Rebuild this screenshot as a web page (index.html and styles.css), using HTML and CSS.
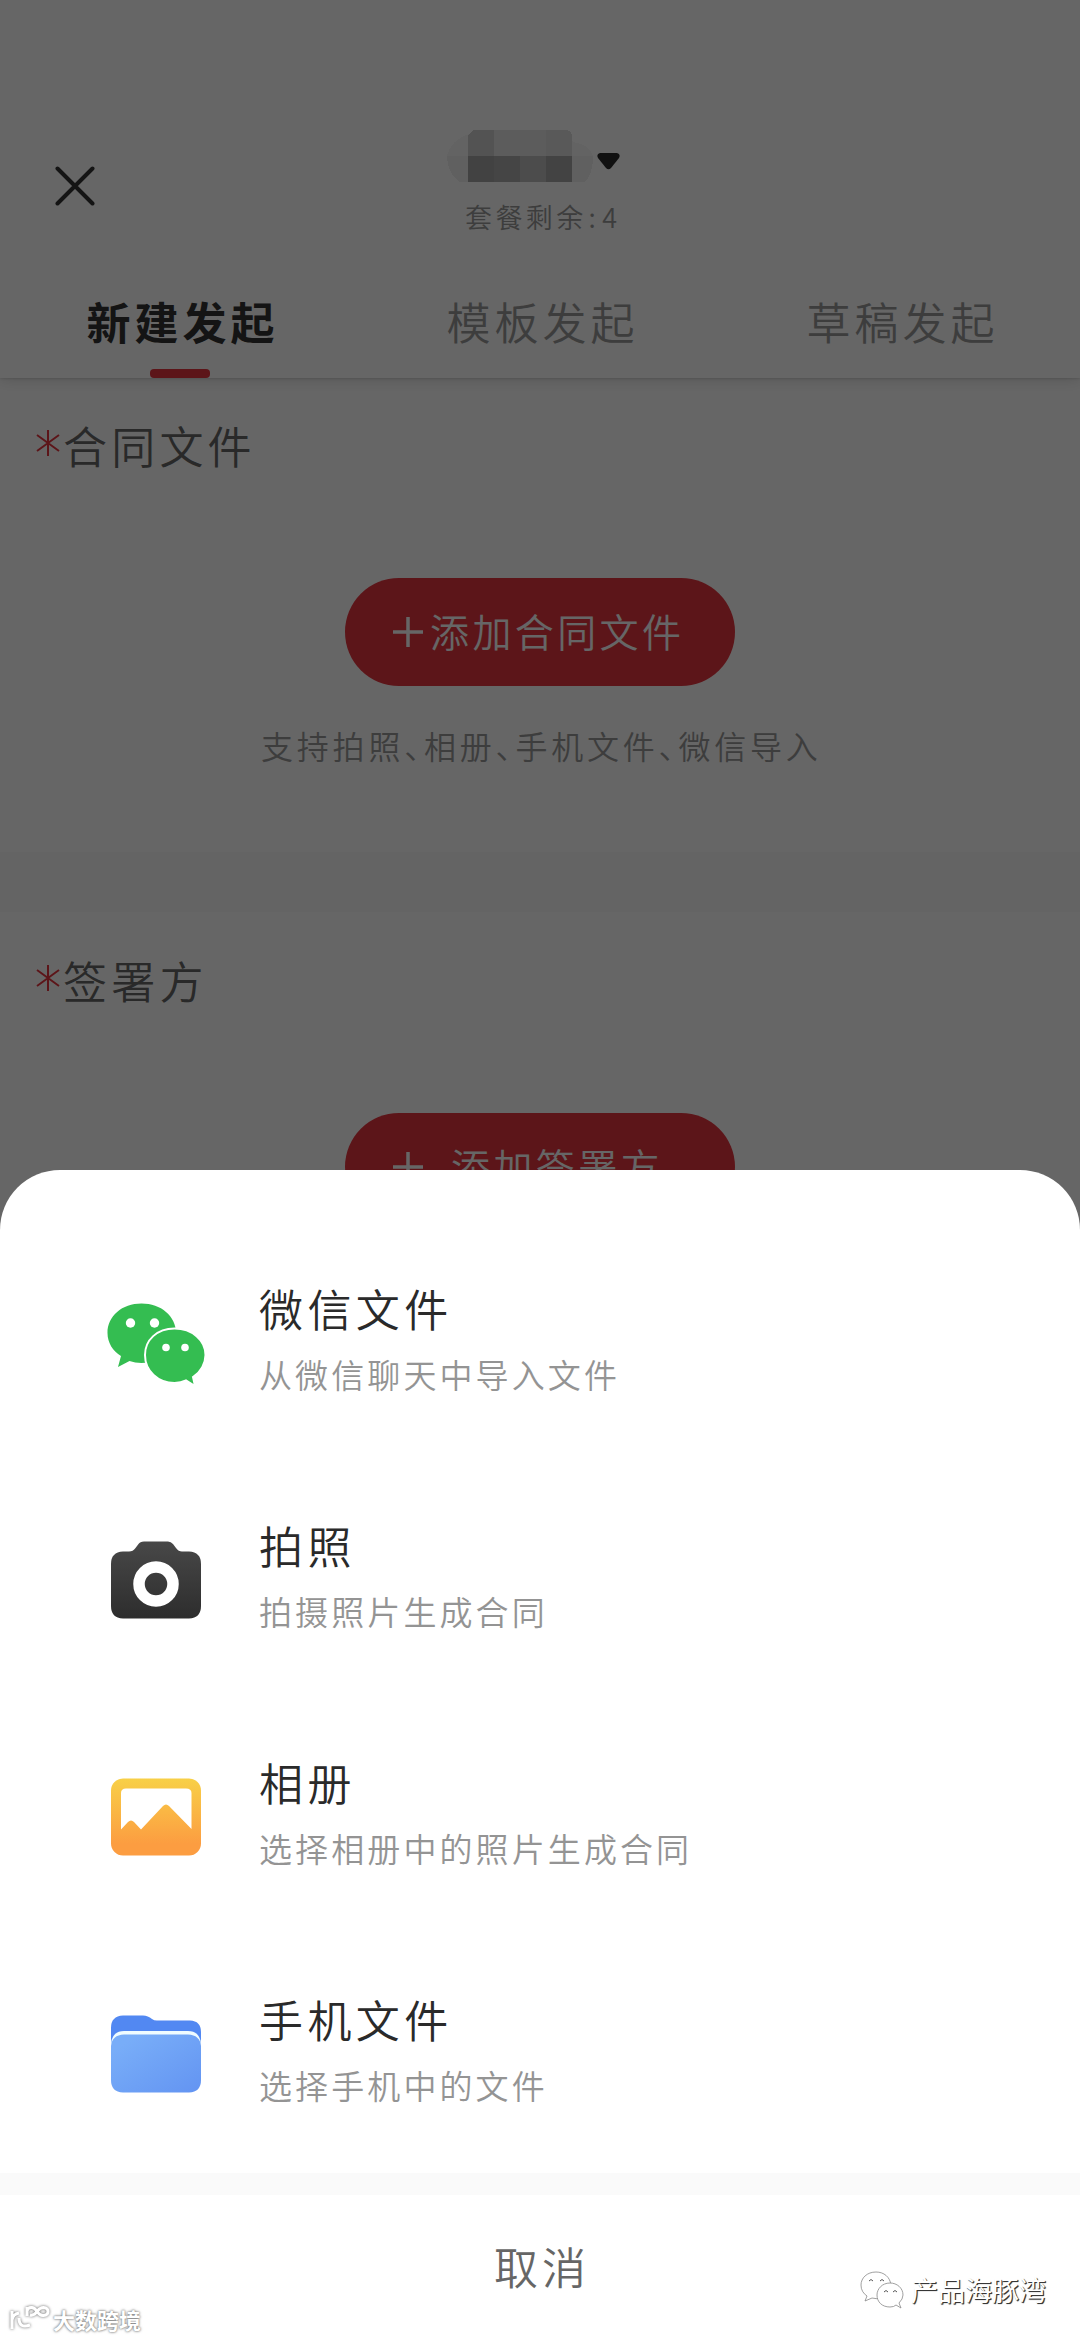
FILE: index.html
```html
<!DOCTYPE html>
<html lang="zh-CN">
<head>
<meta charset="utf-8">
<title>新建发起</title>
<link rel="stylesheet" href="styles.css">
</head>
<body>
<div class="screen">
  <header class="header">
    <svg class="close" viewBox="0 0 40 40"><path d="M2.500 2.500 37.500 37.500M37.500 2.500 2.500 37.500"/></svg>
    <div class="account">
      <div class="account-row">
        <svg class="mosaic" viewBox="0 0 146 52" shape-rendering="crispEdges">
          <path d="M0 26Q4 10 22 4L26 0H120L126 12Q143 15 146 26Z" fill="#f7f7f7"/>
          <path d="M0 26H146Q146 44 138 52H12Q0 42 0 26Z" fill="#f1f1f1"/>
          <path d="M21 5 27 0H47V26H21Z" fill="#d0d0d0"/>
          <path d="M47 0H99V26H47Z" fill="#e5e5e5"/>
          <path d="M99 0H120Q125 2 125 7V26H99Z" fill="#dedede"/>
          <path d="M21 26H47V52H21Z" fill="#a5a5a5"/>
          <path d="M47 26H73V52H47Z" fill="#adadad"/>
          <path d="M73 26H99V52H73Z" fill="#bdbdbd"/>
          <path d="M99 26H125V52H99Z" fill="#a8a8a8"/>
        </svg>
        <svg class="caret" viewBox="0 0 23 17"><path d="M3 0H20Q24 1 22 5L14 15Q11.500 17.500 9 15L1 5Q-1 1 3 0Z"/></svg>
      </div>
      <div class="quota">套餐剩余<span class="colon">:</span>4</div>
    </div>
    <nav class="tabs">
      <div class="tab active">新建发起</div>
      <div class="tab">模板发起</div>
      <div class="tab">草稿发起</div>
    </nav>
  </header>
  <section class="block">
    <h2 class="label"><svg class="star" viewBox="0 0 24 26"><path d="M12 0V26M1 5 23 21M23 5 1 21"/></svg>合同文件</h2>
    <div class="button"><svg class="plus" viewBox="0 0 30 30"><path d="M15 0V30M0 15H30"/></svg><span>添加合同文件</span></div>
    <p class="hint">支持拍照、相册、手机文件、微信导入</p>
  </section>
  <section class="block">
    <h2 class="label"><svg class="star" viewBox="0 0 24 26"><path d="M12 0V26M1 5 23 21M23 5 1 21"/></svg>签署方</h2>
    <div class="button spaced"><svg class="plus" viewBox="0 0 30 30"><path d="M15 0V30M0 15H30"/></svg><span>添加签署方</span></div>
  </section>

  <div class="mask"></div>

  <div class="sheet">
    <div class="options">
      <div class="option">
        <svg class="icon" viewBox="0 0 98 82">
          <g fill="#34bd51"><path d="M34.500 1.500C15 1.500 .5 14 .5 31C.5 41 6 49 14 54L11 65 22.500 59Q28 61 34.500 61C54 61 69 47 69 31C69 14 54 1.500 34.500 1.500Z"/>
          <path d="M67.500 26.500C50 26.500 38 38 38 53C38 69 51 81 67.500 81Q74 81 79 78.500L88 84 86 75C94 70 98.500 61 98.500 53C98.500 38 85 26.500 67.500 26.500Z" stroke="#fff" stroke-width="2"/></g>
          <g fill="#fff"><circle cx="23.500" cy="21" r="4.700"/><circle cx="47.500" cy="21" r="4.700"/><circle cx="59" cy="45.500" r="3.800"/><circle cx="78" cy="45.500" r="3.800"/></g>
        </svg>
        <div class="copy"><div class="title">微信文件</div><div class="desc">从微信聊天中导入文件</div></div>
      </div>
      <div class="option">
        <svg class="icon" viewBox="0 0 98 82">
          <defs><linearGradient id="dark" x2="0" y2="1"><stop stop-color="#484848"/><stop offset="1" stop-color="#2d2d2d"/></linearGradient></defs>
          <path d="M16 12.500H22Q26 12.500 28.500 9L31.500 5Q33 2.500 37 2.500H61Q64 2.500 66 5L69 9Q71.500 12.500 75 12.500H82Q94 13 94 25V67Q94 79 82 79.500H16Q4 79 4 67V25Q4 13 16 12.500Z" fill="url(#dark)"/>
          <circle cx="49" cy="45" r="17" fill="none" stroke="#fff" stroke-width="11.500"/>
        </svg>
        <div class="copy"><div class="title">拍照</div><div class="desc">拍摄照片生成合同</div></div>
      </div>
      <div class="option">
        <svg class="icon" viewBox="0 0 98 82">
          <defs><linearGradient id="sun" x2="0" y2="1"><stop stop-color="#f8d047"/><stop offset=".85" stop-color="#fc9d41"/></linearGradient></defs>
          <rect x="4" y="2.500" width="90" height="77" rx="12" fill="url(#sun)"/>
          <path d="M14 17Q14 12.500 19 12.500H79Q84.500 12.500 84.500 17V53L62 30Q59 27 56 30L34 53.500 27 46Q24 43 21 46L14 53.500Z" fill="#fff"/>
        </svg>
        <div class="copy"><div class="title">相册</div><div class="desc">选择相册中的照片生成合同</div></div>
      </div>
      <div class="option">
        <svg class="icon" viewBox="0 0 98 82">
          <defs><linearGradient id="sky" x2="1" y2="1"><stop offset=".15" stop-color="#78adf8"/><stop offset="1" stop-color="#6394f2"/></linearGradient></defs>
          <path d="M16 2.500H36Q41 2.500 45 6Q47 7.500 50 7.500H83Q94 8 94 19V45H4V15Q4 3 16 2.500Z" fill="#5288f2"/>
          <path d="M4 31Q5 18 17 18H81Q93 18 94 31V45H4Z" fill="#effcff"/>
          <path d="M4 33Q5 22 17 21.500H81Q93 22 94 33V67Q94 79 82 79.500H16Q4 79 4 67Z" fill="url(#sky)"/>
        </svg>
        <div class="copy"><div class="title">手机文件</div><div class="desc">选择手机中的文件</div></div>
      </div>
    </div>
    <div class="cancel">取消</div>
  </div>

  <div class="mark-right">
    <svg class="mark-icon" viewBox="0 0 44 38"><g fill="#fff" stroke="#888" stroke-width=".8"><path d="M16 1C7 1 1 7 1 14Q1 21 7 25L5 30 12 27Q17 29 22 26C28 24 32 20 31 14C30 6 24 1 16 1Z"/><path d="M30 12C22 12 17 18 17 24C17 31 22 36 30 36Q34 36 36 34L41 37 39 32Q43 28 43 24C43 17 37 12 30 12Z"/></g><path d="M9 10q2-3 4 0M20 10q2-3 4 0M24 21q2-3 4 0M33 21q2-3 4 0" fill="none" stroke="#555"/></svg>
    <span>产品海豚湾</span>
  </div>
  <div class="mark-left">
    <svg class="mark-logo" viewBox="0 0 42 28"><path d="M3 7V25M3 16Q4 10 10 9M10 14Q10 25 21 21M18 3V12M18 7Q19 3 23 3.500Q26 4 28 7.500Q31 12 34.500 11.500Q39 11 39 7.500Q39 4 34.500 3.500Q31 3.500 28 7.500Q25 12 21 11"/></svg>
    <span>大数跨境</span>
  </div>
</div>
</body>
</html>
```
FILE: styles.css
```css
* { box-sizing: border-box; }
body {
  margin: 0;
  font-family: "Noto Sans CJK SC", sans-serif;
  font-weight: 350;
}
.screen {
  position: relative;
  width: 1080px;
  height: 2340px;
  overflow: hidden;
  background: #fff;
}
.header {
  display: grid;
  grid-template: 248px 130px / 360px 360px 360px;
  box-shadow: 0 1px 14px rgba(0, 0, 0, .16), 0 0 3px rgba(0, 0, 0, .2);
}
.close {
  width: 40px;
  height: 40px;
  margin: 166px 0 0 55px;
  fill: none;
  stroke: #333;
  stroke-width: 4;
  stroke-linecap: round;
}
.account { padding-top: 130px; }
.account-row {
  display: flex;
  gap: 4px;
  height: 52px;
  padding-left: 87px;
}
.mosaic { width: 146px; height: 52px; }
.caret { width: 23px; height: 17px; margin-top: 23px; fill: #2b2b2b; }
.quota {
  margin-top: 15px;
  padding-left: 105px;
  font-size: 27px;
  line-height: 40px;
  letter-spacing: 3.400px;
  color: #999;
}
.colon { margin: 0 3px 0 2px; }
.tabs {
  grid-column: 1 / 4;
  display: flex;
}
.tab {
  display: flex;
  flex: 1;
  flex-direction: column;
  align-items: center;
  justify-content: space-between;
  padding: 38px 0 0 5px;
  font-size: 44px;
  line-height: 70px;
  letter-spacing: 4px;
  color: #999;
}
.active { color: #333; font-weight: 700; }
.active::after {
  content: "";
  width: 60px;
  height: 9px;
  margin-right: 5px;
  border-radius: 4px;
  background: #e6353f;
}
.block {
  height: 474px;
  padding-top: 32px;
}
.block + .block {
  height: 600px;
  padding-top: 33px;
  margin-top: 60px;
  box-shadow: 0 -60px #fafafa;
}
.label {
  display: flex;
  align-items: center;
  height: 70px;
  margin: 0;
  padding-left: 36px;
  font-size: 44px;
  font-weight: 350;
  letter-spacing: 4.200px;
  color: #666;
}
.star {
  width: 24px;
  height: 26px;
  margin: 0 3px 5px 0;
  fill: none;
  stroke: #e6353f;
  stroke-width: 2;
}
.button {
  display: flex;
  align-items: center;
  width: 390px;
  height: 108px;
  margin: 98px auto 0;
  padding-left: 48px;
  border-radius: 54px;
  background: #e6353f;
  color: #fff;
  font-size: 39px;
  letter-spacing: 3.400px;
}
.button span { padding-bottom: 4px; }
.plus {
  width: 30px;
  height: 30px;
  margin-right: 7px;
  fill: none;
  stroke: #fff;
  stroke-width: 3.500;
}
.spaced .plus { margin-right: 28px; }
.hint {
  margin: 34px 0 0 261px;
  font-size: 32px;
  line-height: 50px;
  letter-spacing: 3.800px;
  font-feature-settings: "halt";
  color: #999;
}
.mask {
  position: absolute;
  inset: 0;
  background: rgba(0, 0, 0, .6);
}
.sheet {
  position: absolute;
  inset: 1170px 0 0;
  display: flex;
  flex-direction: column;
  border-radius: 60px 60px 0 0;
  background: #fff;
}
.options {
  height: 1025px;
  padding-top: 106px;
  border-bottom: 22px solid #fafafa;
}
.option {
  display: flex;
  gap: 54px;
  height: 237px;
  padding-left: 107px;
}
.icon { width: 98px; height: 82px; margin-top: 26px; overflow: visible; }
.copy { margin-top: -3px; }
.title {
  font-size: 44px;
  line-height: 70px;
  letter-spacing: 4.400px;
  color: #2a2a2a;
}
.desc {
  font-size: 33px;
  line-height: 62px;
  letter-spacing: 3.100px;
  color: #949494;
}
.cancel {
  flex: 1;
  padding-left: 4px;
  font-size: 44px;
  line-height: 143px;
  letter-spacing: 4px;
  text-align: center;
  color: #666;
}
.mark-right {
  position: absolute;
  left: 860px;
  top: 2270px;
  display: flex;
  gap: 7px;
  align-items: center;
  font-size: 27px;
  font-weight: 400;
  line-height: 40px;
  color: #fff;
  text-shadow: 1px 1px 1px #333, 1px 1px 0 #555;
}
.mark-icon { width: 44px; height: 38px; }
.mark-left {
  position: absolute;
  left: 9px;
  top: 2304px;
  display: flex;
  gap: 2px;
  font-size: 22px;
  font-weight: 700;
  line-height: 31px;
  color: #fff;
  text-shadow: 0 0 3px #777, 0 0 2px #999;
}
.mark-logo {
  width: 42px;
  height: 28px;
  fill: none;
  stroke: #fff;
  stroke-width: 3;
  filter: drop-shadow(0 0 1.500px #666);
}
```
